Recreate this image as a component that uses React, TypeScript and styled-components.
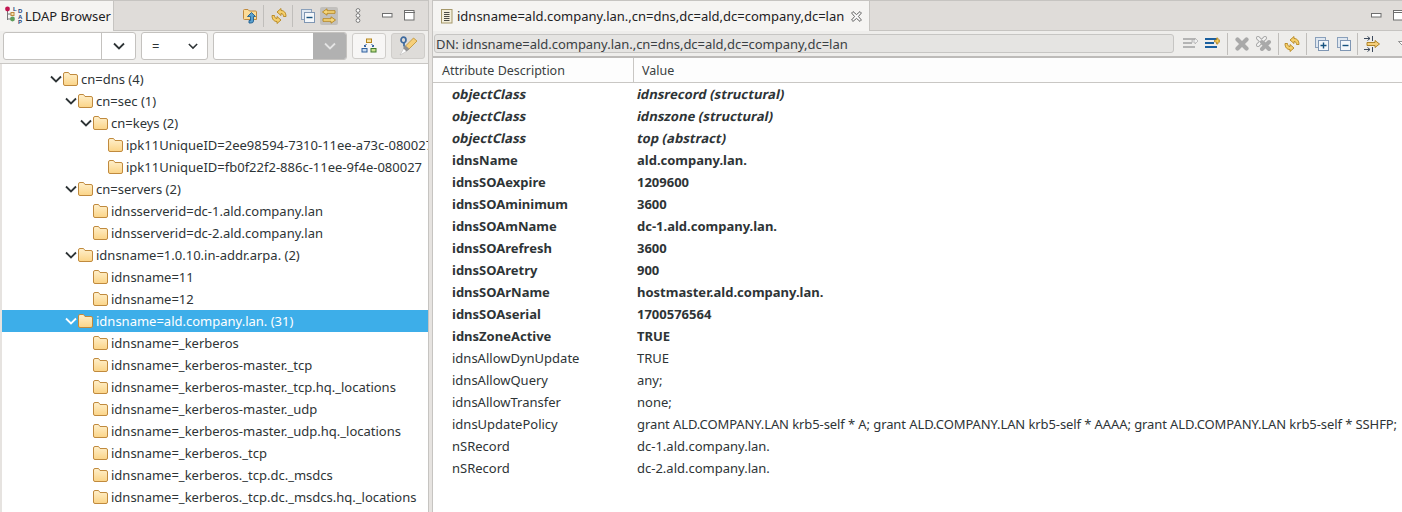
import React from 'react';
import styled, { createGlobalStyle } from 'styled-components';

const Global = createGlobalStyle`
  html, body { margin: 0; padding: 0; background: #e6e3e0; overflow: hidden; }
  #root { width: 1402px; height: 512px; }
`;
const Page = styled.div`
  display: flex; width: 1402px; height: 512px; overflow: hidden;
  font-family: "Noto Sans", "Open Sans", sans-serif; font-size: 13px; color: #2e3436; background: #e6e3e0;
`;
const LeftPane = styled.div`
  width: 428px; flex: none; display: flex; flex-direction: column; overflow: hidden;
  border-right: 1px solid #c6c4c1;
`;
const RightPane = styled.div`
  flex: 1; margin-left: 3px; min-width: 0; display: flex; flex-direction: column; overflow: hidden;
  border-left: 1px solid #c6c4c1;
`;
const TabBar = styled.div`
  height: 29px; flex: none; display: flex; align-items: stretch; background: #dfdcd9;
  border-top: 1px solid #c6c4c1; border-bottom: 1px solid #c6c4c1; box-sizing: content-box;
`;
const ActiveTab = styled.div<{ $w: number; $pad: number; $gap: number }>`
  width: ${p => p.$w}px; flex: none; box-sizing: border-box; display: flex; align-items: center; gap: ${p => p.$gap}px;
  background: #f5f4f2; padding-left: ${p => p.$pad}px; font-size: 13px; color: #1e2224; margin-bottom: -1px;
  border-right: 1px solid #c6c4c1; white-space: nowrap;
`;
const TabTools = styled.div<{ $start?: number }>`
  flex: 1; min-width: 0; display: flex; align-items: center;
  ${p => (p.$start !== undefined ? `justify-content: flex-start; padding-left: ${p.$start}px;` : 'justify-content: flex-end; padding-right: 6px;')}
`;
const Sep = styled.div<{ $l?: number; $r?: number }>`
  width: 1px; height: 22px; flex: none; background: #c0bebb;
  margin: 0 ${p => p.$r ?? 6}px 0 ${p => p.$l ?? 4}px;
`;
const ToolBtn = styled.div<{ $on?: boolean; $w?: number; $ml?: number }>`
  width: ${p => p.$w ?? 18}px; height: 18px; flex: none; display: flex; align-items: center; justify-content: center; border-radius: 2px;
  margin-left: ${p => p.$ml ?? 0}px;
  background: ${p => (p.$on ? '#c2c0bd' : 'transparent')};
`;
const FilterBar = styled.div`
  height: 33px; flex: none; box-sizing: border-box; display: flex; align-items: center; gap: 5px;
  padding: 0 2px 2px 3px; border-bottom: 1px solid #c9c7c4; background: #f0efed;
`;
const Combo = styled.div<{ $w: number }>`
  width: ${p => p.$w}px; height: 28px; flex: none; box-sizing: border-box; display: flex; align-items: stretch;
  background: #fff; border: 1px solid #c4c2bf; border-radius: 3px; overflow: hidden;
`;
const ComboText = styled.div`
  flex: 1; display: flex; align-items: center; padding-left: 10px; font-size: 13px;
`;
const ComboArrow = styled.div<{ $disabled?: boolean; $line?: boolean; $w?: number }>`
  width: ${p => p.$w ?? 33}px; flex: none; display: flex; align-items: center; justify-content: center;
  border-left: ${p => (p.$line ? '1px solid #c4c2bf' : 'none')};
  background: ${p => (p.$disabled ? '#b1b1b1' : 'transparent')};
`;
const SquareBtn = styled.div<{ $on?: boolean }>`
  width: 34px; height: 26px; flex: none; box-sizing: border-box; display: flex; align-items: center; justify-content: center;
  border: 1px solid #cfcdca; border-radius: 3px; background: ${p => (p.$on ? '#dedcd9' : '#f7f6f5')};
`;
const Tree = styled.div`
  flex: 1; background: #fff; margin-left: 2px; padding-top: 4px; overflow: hidden;
`;
const TreeRow = styled.div<{ $level: number; $sel?: boolean }>`
  height: 22px; display: flex; align-items: center; white-space: nowrap; overflow: hidden;
  padding-left: ${p => p.$level}px; font-size: 13px;
  background: ${p => (p.$sel ? '#3daee9' : 'transparent')};
  color: ${p => (p.$sel ? '#fff' : '#2e3436')};
`;
const Twist = styled.span`
  width: 15px; flex: none; display: flex; align-items: center; justify-content: center;
`;
const RowLabel = styled.span`
  margin-left: 3px;
`;
const DnBar = styled.div`
  height: 27px; flex: none; box-sizing: border-box; display: flex; align-items: center; padding: 0 0 0 1px;
  background: #eeedeb; border-bottom: 2px solid #bdbbb9; overflow: hidden;
`;
const DnField = styled.div`
  width: 740px; height: 19px; flex: none; box-sizing: border-box; display: flex; align-items: center; padding-left: 1px;
  background: #e5e4e2; border: 1px solid #c6c5c3; border-radius: 3px; font-size: 13px; color: #3a4043; letter-spacing: -0.03px;
`;
const DnTools = styled.div`
  display: flex; align-items: center; margin-left: 5px;
`;
const Table = styled.div`
  flex: 1; background: #fff; display: flex; flex-direction: column; overflow: hidden;
`;
const Head = styled.div`
  height: 25px; flex: none; display: flex; align-items: stretch; border-bottom: 1px solid #c9c7c4; background: #fdfdfd; box-sizing: border-box;
`;
const HeadCell = styled.div<{ $w?: number }>`
  ${p => (p.$w ? `width:${p.$w}px; flex:none; border-right:1px solid #c9c7c4; padding-left: 9px;` : 'flex:1; padding-left: 8px;')}
  box-sizing: border-box; display: flex; align-items: center; font-size: 12.5px; color: #3a3f41;
`;
const AttrRow = styled.div<{ $strong: boolean }>`
  height: 22px; display: flex; align-items: center; white-space: nowrap; font-size: 13px; color: #2e3436;
  font-weight: ${p => (p.$strong ? 700 : 400)};
`;
const AttrName = styled.div`
  width: 204px; flex: none; box-sizing: border-box; padding-left: 19px;
`;
const AttrValue = styled.div<{ $tight?: boolean }>`
  flex: 1; min-width: 0; letter-spacing: ${p => (p.$tight ? '-0.09px' : '0')};
`;
const Slant = styled.span`
  display: inline-block; transform: skewX(-12deg); transform-origin: 0 55%; letter-spacing: 0.08px;
`;

const Chevron = ({ color = '#2e3436', w = 12 }: { color?: string; w?: number }) => (
  <svg width={w} height="8" viewBox="0 0 12 8"><path d="M1 1.500 6 6.500 11 1.500" fill="none" stroke={color} strokeWidth="1.800" /></svg>
);
const Folder = () => (
  <svg width="15" height="14" viewBox="0 0 15 14" style={{ flex: 'none' }}>
    <defs><linearGradient id="fg" x1="0" y1="0" x2="0" y2="1"><stop offset="0" stopColor="#fff0cc" /><stop offset="1" stopColor="#fbd487" /></linearGradient></defs>
    <path d="M.5 3V2Q.5.5 2 .5H5.500L7 2.500H13Q14.500 2.500 14.500 4V12Q14.500 13.500 13 13.500H2Q.5 13.500 .5 12Z" fill="url(#fg)" stroke="#c08a3e" />
  </svg>
);
const Row = ({ level, label, open, sel }: { level: number; label: string; open?: boolean; sel?: boolean }) => (
  <TreeRow $level={level} $sel={sel}>
    {open ? <Twist><Chevron color={sel ? '#fff' : '#2e3436'} /></Twist> : null}
    <Folder />
    <RowLabel>{label}</RowLabel>
  </TreeRow>
);
const LdapLogo = () => (
  <svg width="18" height="20" viewBox="0 0 18 20" style={{ flex: 'none' }}>
    <path d="M2.500 3V14M2.500 8H6M2.500 13H6" fill="none" stroke="#777" strokeWidth="1" />
    <circle cx="2.500" cy="3" r="2.400" fill="#c2144f" />
    <circle cx="7.500" cy="13" r="2.400" fill="#5f9e5b" />
    <rect x="6" y="6.500" width="3" height="3" fill="#f6e3b0" stroke="#c08a3e" />
    <text x="8" y="5" fontSize="6" fontWeight="700" fill="#1e3f7a" fontFamily="Liberation Sans">L</text>
    <text x="13" y="7" fontSize="6" fontWeight="700" fill="#1e3f7a" fontFamily="Liberation Sans">D</text>
    <text x="13" y="12.500" fontSize="6" fontWeight="700" fill="#1e3f7a" fontFamily="Liberation Sans">A</text>
    <text x="13" y="18" fontSize="6" fontWeight="700" fill="#1e3f7a" fontFamily="Liberation Sans">P</text>
  </svg>
);
const Refresh = () => (
  <svg width="16" height="16" viewBox="0 0 16 16">
    <path d="M6 4 10 .5V2.500C13 2.500 15 4.500 15 8.500H12.500C12.500 6.500 11.500 5.500 10 5.500V7.500Z" fill="#f5cf6c" stroke="#b5861f" strokeWidth=".9" />
    <path d="M10 12 6 15.500V13.500C3 13.500 1 11.500 1 7.500H3.500C3.500 9.500 4.500 10.500 6 10.500V8.500Z" fill="#f5cf6c" stroke="#b5861f" strokeWidth=".9" />
  </svg>
);
const FolderUp = () => (
  <svg width="15" height="16" viewBox="0 0 15 16">
    <path d="M.5 3V2.500Q.5 1.500 1.500 1.500H5L6.500 3H12.500Q13.500 3 13.500 4V11.500H1.500Q.5 11.500.5 10.500Z" fill="#fcdc98" stroke="#c08a3e" />
    <path d="M8.500 4.500 12.500 8.500H10.500V13Q10.500 15 8 15H6V12.500H7.500Q7.500 12.500 7.500 12V8.500H4.500Z" fill="#5aa0cf" stroke="#1f5f8e" strokeWidth=".9" />
  </svg>
);
const Collapse = ({ plus }: { plus?: boolean }) => (
  <svg width="14" height="14" viewBox="0 0 14 14">
    <rect x=".5" y=".5" width="10" height="10" fill="#dfe7f0" stroke="#8aa0bb" />
    <rect x="3.500" y="3.500" width="10" height="10" fill="#f4f7fa" stroke="#7f96b3" />
    <path d={plus ? 'M5.500 8.500H11.500M8.500 5.500V11.500' : 'M5.500 8.500H11.500'} stroke="#16527f" strokeWidth="1.400" />
  </svg>
);
const SyncArrows = () => (
  <svg width="16" height="16" viewBox="0 0 16 16">
    <path d="M6 .8 1.500 4 6 7.200V5.300H14V2.700H6Z" fill="#f6d77c" stroke="#b5861f" strokeWidth=".9" />
    <path d="M10 8.800 14.500 12 10 15.200V13.300H2V10.700H10Z" fill="#f6d77c" stroke="#b5861f" strokeWidth=".9" />
  </svg>
);
const Kebab = () => (
  <svg width="6" height="15" viewBox="0 0 6 15">
    {[2.500, 7.500, 12.500].map(y => <circle key={y} cx="3" cy={y} r="1.900" fill="#fff" stroke="#7a7a7a" />)}
  </svg>
);
const Minimize = () => <svg width="11" height="5" viewBox="0 0 11 5"><rect x=".5" y=".5" width="9.500" height="3.500" fill="#fff" stroke="#6e6e6e" /></svg>;
const Maximize = () => <svg width="11" height="11" viewBox="0 0 11 11"><rect x=".5" y=".5" width="9.500" height="9.500" fill="#fff" stroke="#6e6e6e" /><path d="M0 2.500H11" stroke="#6e6e6e" /></svg>;
const TreeIcon = () => (
  <svg width="16" height="16" viewBox="0 0 16 16">
    <rect x="5.500" y="1" width="5" height="3.500" fill="#f8e4a8" stroke="#b5861f" />
    <path d="M5.500 6 3.500 8.500M3.500 7V8.500H5M10.500 6 12.500 8.500M12.500 7V8.500H11" fill="none" stroke="#2e5f9e" />
    <rect x="1" y="10.500" width="5" height="3.500" fill="#c9dcf0" stroke="#2e5f9e" />
    <rect x="10" y="10.500" width="5" height="3.500" fill="#c8e08a" stroke="#3f7a2a" />
  </svg>
);
const KeyPen = () => (
  <svg width="20" height="20" viewBox="0 0 20 20">
    <path d="M15.500 2 19 5 10 14 6.500 11Z" fill="#f6cf7a" stroke="#b5861f" strokeWidth=".7" />
    <path d="M6.500 11 10 14 6.500 16.500 2 19Z" fill="#fff" stroke="#bbb" strokeWidth=".6" />
    <path d="M7.500 9.500 11.500 13 8.500 15.500 5 12Z" fill="#8f8f8f" />
    <ellipse cx="5.500" cy="4" rx="2.500" ry="2.800" fill="none" stroke="#3e6a9e" strokeWidth="1.700" />
    <path d="M6 6.500V10.500" stroke="#3e6a9e" strokeWidth="1.700" />
  </svg>
);
const EditorIcon = () => (
  <svg width="12" height="15" viewBox="0 0 12 15" style={{ flex: 'none' }}>
    <rect x=".5" y=".5" width="10.500" height="13.500" fill="#f3eeda" stroke="#a5986a" />
    <path d="M3 3.500H8.500M3 5.500H8.500M3 7.500H8.500M3 9.500H8.500M3 11.500H8.500" stroke="#4a4a44" />
  </svg>
);
const CloseX = () => (
  <svg width="11" height="11" viewBox="0 0 11 11" style={{ flex: 'none', marginLeft: 3 }}>
    <path d="M.6 2 2 .6 5.500 3.600 9 .6 10.400 2 7.400 5.500 10.400 9 9 10.400 5.500 7.400 2 10.400 .6 9 3.600 5.500Z" fill="#fff" stroke="#4f4f4f" strokeWidth=".9" />
  </svg>
);
const Lines = ({ active }: { active?: boolean }) => (
  <svg width="15" height="13" viewBox="0 0 15 13">
    {[2, 6, 10].map(y => <path key={y} d={`M0 ${y}H${y === 6 ? 9 : 12}`} stroke={active ? '#1b5f9e' : '#b4b4b4'} strokeWidth="2" />)}
    {active
      ? <path d="M9.500 3H11.500V1H13V3H15V5H13V7H11.500V5H9.500Z" fill="#f6cf5c" stroke="#a87a1a" strokeWidth=".7" />
      : <path d="M9 3H12V1L15 4 12 7V5H9Z" fill="#f0f0f0" stroke="#aaa" strokeWidth=".7" />}
  </svg>
);
const GrayX = () => (
  <svg width="14" height="14" viewBox="0 0 14 14"><path d="M2.500 2.500 11.500 11.500M11.500 2.500 2.500 11.500" stroke="#a9a9a9" strokeWidth="4.200" strokeLinecap="round" /></svg>
);
const GrayXAll = () => (
  <svg width="16" height="15" viewBox="0 0 16 15">
    <path d="M2 2 9 9M9 2 2 9" stroke="#a9a9a9" strokeWidth="4" strokeLinecap="round" />
    <path d="M2 2 9 9M9 2 2 9" stroke="#f4f4f3" strokeWidth="2.200" strokeLinecap="round" />
    <path d="M6 6 13 13M13 6 6 13" stroke="#a9a9a9" strokeWidth="4" strokeLinecap="round" />
  </svg>
);
const SplitArrow = () => (
  <svg width="16" height="16" viewBox="0 0 16 16">
    <path d="M0 2.500H6M3.500 .5 6 2.500 3.500 4.500M0 13.500H6M3.500 11.500 6 13.500 3.500 15.500" fill="none" stroke="#3d4a5c" />
    <path d="M8.500 0V5M8.500 11V16" stroke="#3d4a5c" />
    <path d="M3 6.500H11V4.500L15.500 8 11 11.500V9.500H3Z" fill="#f6cf7a" stroke="#a87a1a" strokeWidth=".9" />
  </svg>
);
const ViewMenu = () => (
  <svg width="10" height="6" viewBox="0 0 10 6"><path d="M.5.5H9.500L5 5Z" fill="#fff" stroke="#777" strokeWidth=".8" /></svg>
);

const treeRows: { level: number; label: string; open?: boolean; sel?: boolean }[] = [
  { level: 46, label: 'cn=dns (4)', open: true },
  { level: 61, label: 'cn=sec (1)', open: true },
  { level: 76, label: 'cn=keys (2)', open: true },
  { level: 106, label: 'ipk11UniqueID=2ee98594-7310-11ee-a73c-080027' },
  { level: 106, label: 'ipk11UniqueID=fb0f22f2-886c-11ee-9f4e-080027' },
  { level: 61, label: 'cn=servers (2)', open: true },
  { level: 91, label: 'idnsserverid=dc-1.ald.company.lan' },
  { level: 91, label: 'idnsserverid=dc-2.ald.company.lan' },
  { level: 61, label: 'idnsname=1.0.10.in-addr.arpa. (2)', open: true },
  { level: 91, label: 'idnsname=11' },
  { level: 91, label: 'idnsname=12' },
  { level: 61, label: 'idnsname=ald.company.lan. (31)', open: true, sel: true },
  { level: 91, label: 'idnsname=_kerberos' },
  { level: 91, label: 'idnsname=_kerberos-master._tcp' },
  { level: 91, label: 'idnsname=_kerberos-master._tcp.hq._locations' },
  { level: 91, label: 'idnsname=_kerberos-master._udp' },
  { level: 91, label: 'idnsname=_kerberos-master._udp.hq._locations' },
  { level: 91, label: 'idnsname=_kerberos._tcp' },
  { level: 91, label: 'idnsname=_kerberos._tcp.dc._msdcs' },
  { level: 91, label: 'idnsname=_kerberos._tcp.dc._msdcs.hq._locations' },
];
const attrs: { k: 'obj' | 'must' | 'opt'; n: string; v: string }[] = [
  { k: 'obj', n: 'objectClass', v: 'idnsrecord (structural)' },
  { k: 'obj', n: 'objectClass', v: 'idnszone (structural)' },
  { k: 'obj', n: 'objectClass', v: 'top (abstract)' },
  { k: 'must', n: 'idnsName', v: 'ald.company.lan.' },
  { k: 'must', n: 'idnsSOAexpire', v: '1209600' },
  { k: 'must', n: 'idnsSOAminimum', v: '3600' },
  { k: 'must', n: 'idnsSOAmName', v: 'dc-1.ald.company.lan.' },
  { k: 'must', n: 'idnsSOArefresh', v: '3600' },
  { k: 'must', n: 'idnsSOAretry', v: '900' },
  { k: 'must', n: 'idnsSOArName', v: 'hostmaster.ald.company.lan.' },
  { k: 'must', n: 'idnsSOAserial', v: '1700576564' },
  { k: 'must', n: 'idnsZoneActive', v: 'TRUE' },
  { k: 'opt', n: 'idnsAllowDynUpdate', v: 'TRUE' },
  { k: 'opt', n: 'idnsAllowQuery', v: 'any;' },
  { k: 'opt', n: 'idnsAllowTransfer', v: 'none;' },
  { k: 'opt', n: 'idnsUpdatePolicy', v: 'grant ALD.COMPANY.LAN krb5-self * A; grant ALD.COMPANY.LAN krb5-self * AAAA; grant ALD.COMPANY.LAN krb5-self * SSHFP;' },
  { k: 'opt', n: 'nSRecord', v: 'dc-1.ald.company.lan.' },
  { k: 'opt', n: 'nSRecord', v: 'dc-2.ald.company.lan.' },
];

export default function App() {
  return (
    <Page>
      <Global />
      <LeftPane>
        <TabBar>
          <ActiveTab $w={114} $pad={5} $gap={2}><LdapLogo />LDAP Browser</ActiveTab>
          <TabTools>
            <ToolBtn><FolderUp /></ToolBtn>
            <Sep />
            <ToolBtn><Refresh /></ToolBtn>
            <Sep />
            <ToolBtn><Collapse /></ToolBtn>
            <ToolBtn $on $ml={3}><SyncArrows /></ToolBtn>
            <ToolBtn $w={40}><Kebab /></ToolBtn>
            <ToolBtn $w={18}><Minimize /></ToolBtn>
            <ToolBtn $w={26}><Maximize /></ToolBtn>
          </TabTools>
        </TabBar>
        <FilterBar>
          <Combo $w={133}><ComboText /><ComboArrow $line><Chevron /></ComboArrow></Combo>
          <Combo $w={67}><ComboText>=</ComboText><ComboArrow $w={28}><Chevron w={10} /></ComboArrow></Combo>
          <Combo $w={134}><ComboText /><ComboArrow $disabled><Chevron color="#e4e4e4" /></ComboArrow></Combo>
          <SquareBtn><TreeIcon /></SquareBtn>
          <SquareBtn $on><KeyPen /></SquareBtn>
        </FilterBar>
        <Tree>
          {treeRows.map((r, i) => <Row key={i} {...r} />)}
        </Tree>
      </LeftPane>
      <RightPane>
        <TabBar>
          <ActiveTab $w={437} $pad={8} $gap={4}>
            <EditorIcon />
            <span>idnsname=ald.company.lan.,cn=dns,dc=ald,dc=company,dc=lan</span>
            <CloseX />
          </ActiveTab>
          <TabTools $start={497}>
            <ToolBtn $w={18}><Minimize /></ToolBtn>
            <ToolBtn $w={26}><Maximize /></ToolBtn>
          </TabTools>
        </TabBar>
        <DnBar>
          <DnField>DN: idnsname=ald.company.lan.,cn=dns,dc=ald,dc=company,dc=lan</DnField>
          <DnTools>
            <ToolBtn $w={22}><Lines /></ToolBtn>
            <ToolBtn $w={22}><Lines active /></ToolBtn>
            <Sep $l={4} $r={3} />
            <ToolBtn $w={22}><GrayX /></ToolBtn>
            <ToolBtn $w={22}><GrayXAll /></ToolBtn>
            <Sep $l={3} $r={5} />
            <ToolBtn $w={16}><Refresh /></ToolBtn>
            <Sep $l={6} $r={4} />
            <ToolBtn $w={22}><Collapse plus /></ToolBtn>
            <ToolBtn $w={22}><Collapse /></ToolBtn>
            <Sep $l={2} $r={5} />
            <ToolBtn $w={18}><SplitArrow /></ToolBtn>
            <ToolBtn $w={10} $ml={17}><ViewMenu /></ToolBtn>
          </DnTools>
        </DnBar>
        <Table>
          <Head>
            <HeadCell $w={201}>Attribute Description</HeadCell>
            <HeadCell>Value</HeadCell>
          </Head>
          <div>
            {attrs.map((a, i) => (
              <AttrRow key={i} $strong={a.k !== 'opt'}>
                <AttrName>{a.k === 'obj' ? <Slant>{a.n}</Slant> : a.n}</AttrName>
                <AttrValue $tight={a.v.length > 60}>{a.k === 'obj' ? <Slant>{a.v}</Slant> : a.v}</AttrValue>
              </AttrRow>
            ))}
          </div>
        </Table>
      </RightPane>
    </Page>
  );
}
